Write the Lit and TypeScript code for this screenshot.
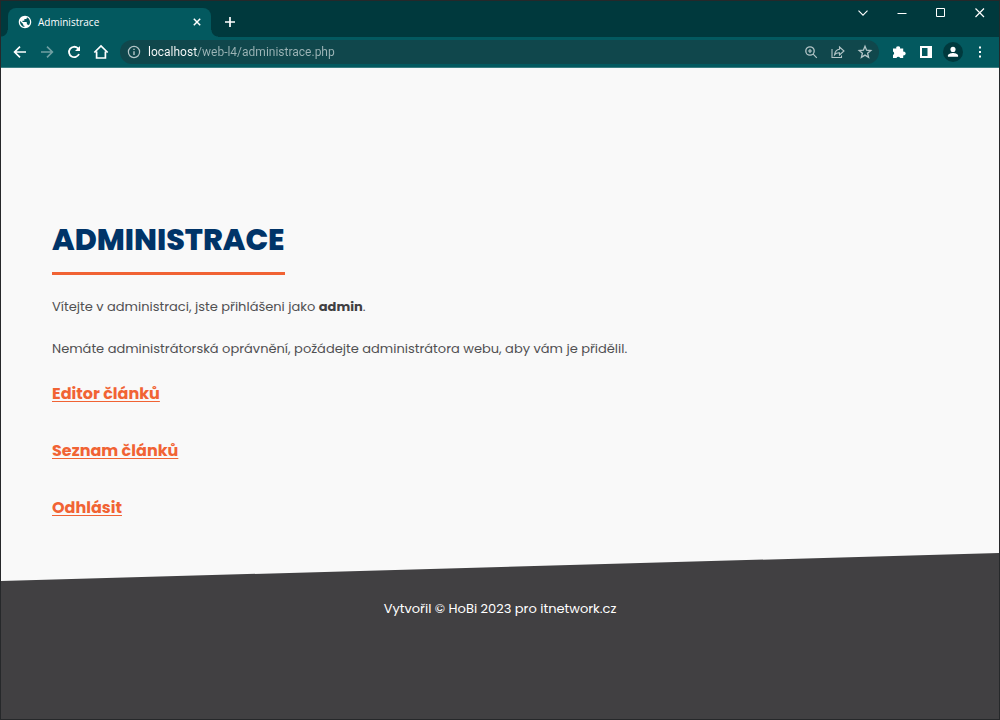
import { LitElement, html, css, svg } from "lit";
import { customElement, property } from "lit/decorators.js";

const icons: Record<string, unknown> = {
  globe: svg`<path transform="translate(.5 .5) scale(.625)" d="M12 2C6.480 2 2 6.480 2 12s4.480 10 10 10 10-4.480 10-10S17.520 2 12 2zm-1 17.930c-3.950-.49-7-3.850-7-7.930 0-.62.080-1.210.210-1.790L9 15v1c0 1.100.9 2 2 2v1.930zm6.900-2.540c-.26-.81-1-1.390-1.900-1.390h-1v-3c0-.55-.45-1-1-1H8v-2h2c.55 0 1-.45 1-1V7h2c1.100 0 2-.9 2-2v-.41c2.930 1.190 5 4.060 5 7.410 0 2.080-.8 3.970-2.100 5.390z" fill="currentColor" stroke="none"/>`,
  close: svg`<path d="M4.800 4.800l6.400 6.400M11.200 4.800l-6.400 6.400" stroke-width="1.500"/>`,
  plus: svg`<path d="M8 3v10M3 8h10" stroke-width="1.700"/>`,
  chevron: svg`<path d="M3.500 5.700L8 10.200l4.500-4.500" stroke-width="1.100"/>`,
  minimize: svg`<path d="M3.500 8.500h9" stroke-width="1"/>`,
  maximize: svg`<path d="M3.500 3.500h8v8h-8z" stroke-width="1"/>`,
  exit: svg`<path d="M3.500 3.500l8.500 8.500M12 3.500L3.500 12" stroke-width="1.200"/>`,
  back: svg`<path d="M14 8H3M8 2.600L2.600 8 8 13.400" stroke-width="1.700"/>`,
  forward: svg`<path d="M2 8h11M8 2.600L13.400 8 8 13.400" stroke-width="1.600"/>`,
  reload: svg`<path d="M13 10A5.200 5.200 0 1 1 11.800 4.200L13 5.400" stroke-width="1.800"/><path d="M14 2v5H9z" fill="currentColor" stroke="none"/>`,
  home: svg`<path d="M1.300 8.500L8 2l6.700 6.500M3.600 7.500V14h8.800V7.500" stroke-width="1.700"/>`,
  info: svg`<circle cx="8" cy="8" r="5.600" stroke-width="1.200"/><path d="M8 7.200v3.800M8 4.800v1.300" stroke-width="1.400"/>`,
  zoom: svg`<circle cx="7" cy="7" r="4.200" stroke-width="1.300"/><path d="M10.200 10.200l3.600 3.600M7 5v4M5 7h4" stroke-width="1.200"/>`,
  share: svg`<path d="M2 5v8.500h9.500v-2" stroke-width="1.100"/><path d="M9.500 3l4.500 4-4.500 4V8.700C7 8.600 5.600 9.400 4.600 10.700 5 7.800 6.600 5.700 9.500 5.300z" stroke-width="1.100"/>`,
  star: svg`<path d="M8 2.300l1.600 3.900 4.200.3-3.200 2.700 1 4.100L8 11.100l-3.600 2.200 1-4.100L2.200 6.500l4.200-.3z" stroke-width="1.300"/>`,
  puzzle: svg`<path d="M2 4.600h3.300a1.900 1.900 0 1 1 3.700 0h3.200v3.100a1.900 1.900 0 1 1 0 3.600V14H9.100a1.900 1.900 0 0 0-3.600 0H2v-3.100a1.900 1.900 0 0 0 0-3.500z" fill="currentColor" stroke="none"/>`,
  panel: svg`<path d="M2 2h12v12H2zM4 4v8h5.500V4z" fill="currentColor" fill-rule="evenodd" stroke="none"/>`,
  person: svg`<circle cx="8" cy="5" r="2.900" fill="currentColor" stroke="none"/><path d="M2.200 13.500V12c0-2 3.800-3 5.800-3s5.800 1 5.800 3v1.500z" fill="currentColor" stroke="none"/>`,
  menu: svg`<path d="M7 2.500h2v2H7zM7 7h2v2H7zM7 11.500h2v2H7z" fill="currentColor" stroke="none"/>`,
};

const icon = (name: string) => html`<svg viewBox="0 0 16 16" width="16" height="16" fill="none" stroke="currentColor" aria-hidden="true">${icons[name]}</svg>`;

const buttonReset = css`
  * { box-sizing: border-box; }
  button {
    display: flex; align-items: center; justify-content: center;
    flex: none; padding: 0; border: 0; background: none; color: #fff;
  }
  svg { display: block; flex: none; }
`;

@customElement("browser-chrome")
class BrowserChrome extends LitElement {
  @property() heading = "";
  @property() host = "";
  @property() path = "";

  static styles = [buttonReset, css`
    :host { display: block; font-family: "Open Sans", "Noto Sans", sans-serif; color: #fff; }
    .strip { display: flex; align-items: flex-end; height: 36px; padding-left: 7px; background: #00393d; }
    .tab {
      position: relative; display: flex; align-items: center; gap: 5px; width: 203px; height: 29px;
      padding: 0 6px 1px 9px; border-radius: 8px 8px 0 0; background: #03595f;
    }
    .tab::before, .tab::after {
      content: ""; position: absolute; bottom: 0; width: 7px; height: 7px;
    }
    .tab::before { right: 100%; background: radial-gradient(circle at 0 0, transparent 6px, #03595f 7px); }
    .tab::after { left: 100%; background: radial-gradient(circle at 100% 0, transparent 6px, #03595f 7px); }
    .title { flex: 1; font-size: 10px; line-height: 16px; }
    .add { width: 37px; height: 29px; padding-bottom: 1px; }
    .window { display: flex; align-self: flex-start; margin-left: auto; }
    .window button { width: 39px; height: 24px; }
    .toolbar {
      display: flex; align-items: center; height: 31px; padding: 0 6px 1px 5px;
      background: #03595f; border-bottom: 1px solid #3a7d82;
    }
    .toolbar button { width: 27px; height: 24px; }
    .toolbar .muted { color: #71a0a3; }
    .address {
      display: flex; align-items: center; flex: 1; min-width: 0; height: 24px; margin: 0 6px;
      padding-right: 1px; border-radius: 12px; background: #10474c;
    }
    .address button { color: #b4c6c8; }
    .url {
      flex: 1; min-width: 0; height: 22px; padding: 0 0 0 1px; border: 0; outline: 0;
      font: 12px/16px Roboto, "Noto Sans", sans-serif; color: transparent;
      background: linear-gradient(90deg, #fff 50px, #9db5b7 50px); background-clip: text; -webkit-background-clip: text;
    }
    .avatar { display: grid; place-items: center; width: 20px; height: 20px; border-radius: 50%; background: #00393d; }
    .avatar svg { width: 14px; height: 14px; }
  `];

  render() {
    return html`
      <div class="strip">
        <div class="tab">
          ${icon("globe")}<span class="title">${this.heading}</span>
          <button aria-label="Zavřít kartu">${icon("close")}</button>
        </div>
        <button class="add" aria-label="Nová karta">${icon("plus")}</button>
        <div class="window">
          <button aria-label="Hledat karty">${icon("chevron")}</button>
          <button aria-label="Minimalizovat">${icon("minimize")}</button>
          <button aria-label="Maximalizovat">${icon("maximize")}</button>
          <button aria-label="Zavřít">${icon("exit")}</button>
        </div>
      </div>
      <div class="toolbar">
        <button aria-label="Zpět">${icon("back")}</button>
        <button class="muted" aria-label="Vpřed">${icon("forward")}</button>
        <button aria-label="Načíst znovu">${icon("reload")}</button>
        <button aria-label="Domů">${icon("home")}</button>
        <div class="address">
          <button aria-label="Informace o webu">${icon("info")}</button>
          <input class="url" type="text" aria-label="Adresa" .value=${this.host + this.path}>
          <button aria-label="Lupa">${icon("zoom")}</button>
          <button aria-label="Sdílet">${icon("share")}</button>
          <button aria-label="Přidat záložku">${icon("star")}</button>
        </div>
        <button aria-label="Rozšíření">${icon("puzzle")}</button>
        <button aria-label="Postranní panel">${icon("panel")}</button>
        <button aria-label="Profil"><span class="avatar">${icon("person")}</span></button>
        <button aria-label="Nabídka">${icon("menu")}</button>
      </div>`;
  }
}

@customElement("admin-page")
class AdminPage extends LitElement {
  static styles = css`
    :host {
      display: flex; flex-direction: column; flex: 1;
      font: 13px/28px Poppins, Inter, sans-serif; color: #505052; background: #f9f9f9;
    }
    main { padding: 144px 51px 31px; }
    h1 {
      width: fit-content; margin: 0 0 18px; padding-bottom: 5px; border-bottom: 3px solid #f16334;
      font-size: 30px; line-height: 55px; font-weight: 800; color: #003468; text-transform: uppercase;
    }
    p { margin: 0 0 14px; }
    strong { color: #414042; }
    ul { display: grid; gap: 29px; margin: 17px 0 0; padding: 0; list-style: none; font-size: 16px; }
    a { font-weight: 700; color: #f16334; text-underline-offset: 2px; text-decoration-thickness: 1px; }
    footer {
      flex: 1; padding: 42px 20px; text-align: center; color: #fff; background: #414042;
      clip-path: polygon(0 28px, 100% 0, 100% 100%, 0 100%);
    }
  `;

  links = ["Editor článků", "Seznam článků", "Odhlásit"];

  render() {
    return html`
      <main>
        <h1>Administrace</h1>
        <p>Vítejte v administraci, jste přihlášeni jako <strong>admin</strong>.</p>
        <p>Nemáte administrátorská oprávnění, požádejte administrátora webu, aby vám je přidělil.</p>
        <ul>${this.links.map((label) => html`<li><a href="#">${label}</a></li>`)}</ul>
      </main>
      <footer>Vytvořil © HoBi 2023 pro itnetwork.cz</footer>`;
  }
}

@customElement("app-root")
class AppRoot extends LitElement {
  static styles = css`
    :host {
      display: flex; flex-direction: column; box-sizing: border-box; min-height: 100vh;
      border: 1px solid #26282a;
    }
  `;

  render() {
    return html`
      <browser-chrome heading="Administrace" host="localhost" path="/web-l4/administrace.php"></browser-chrome>
      <admin-page></admin-page>`;
  }
}
